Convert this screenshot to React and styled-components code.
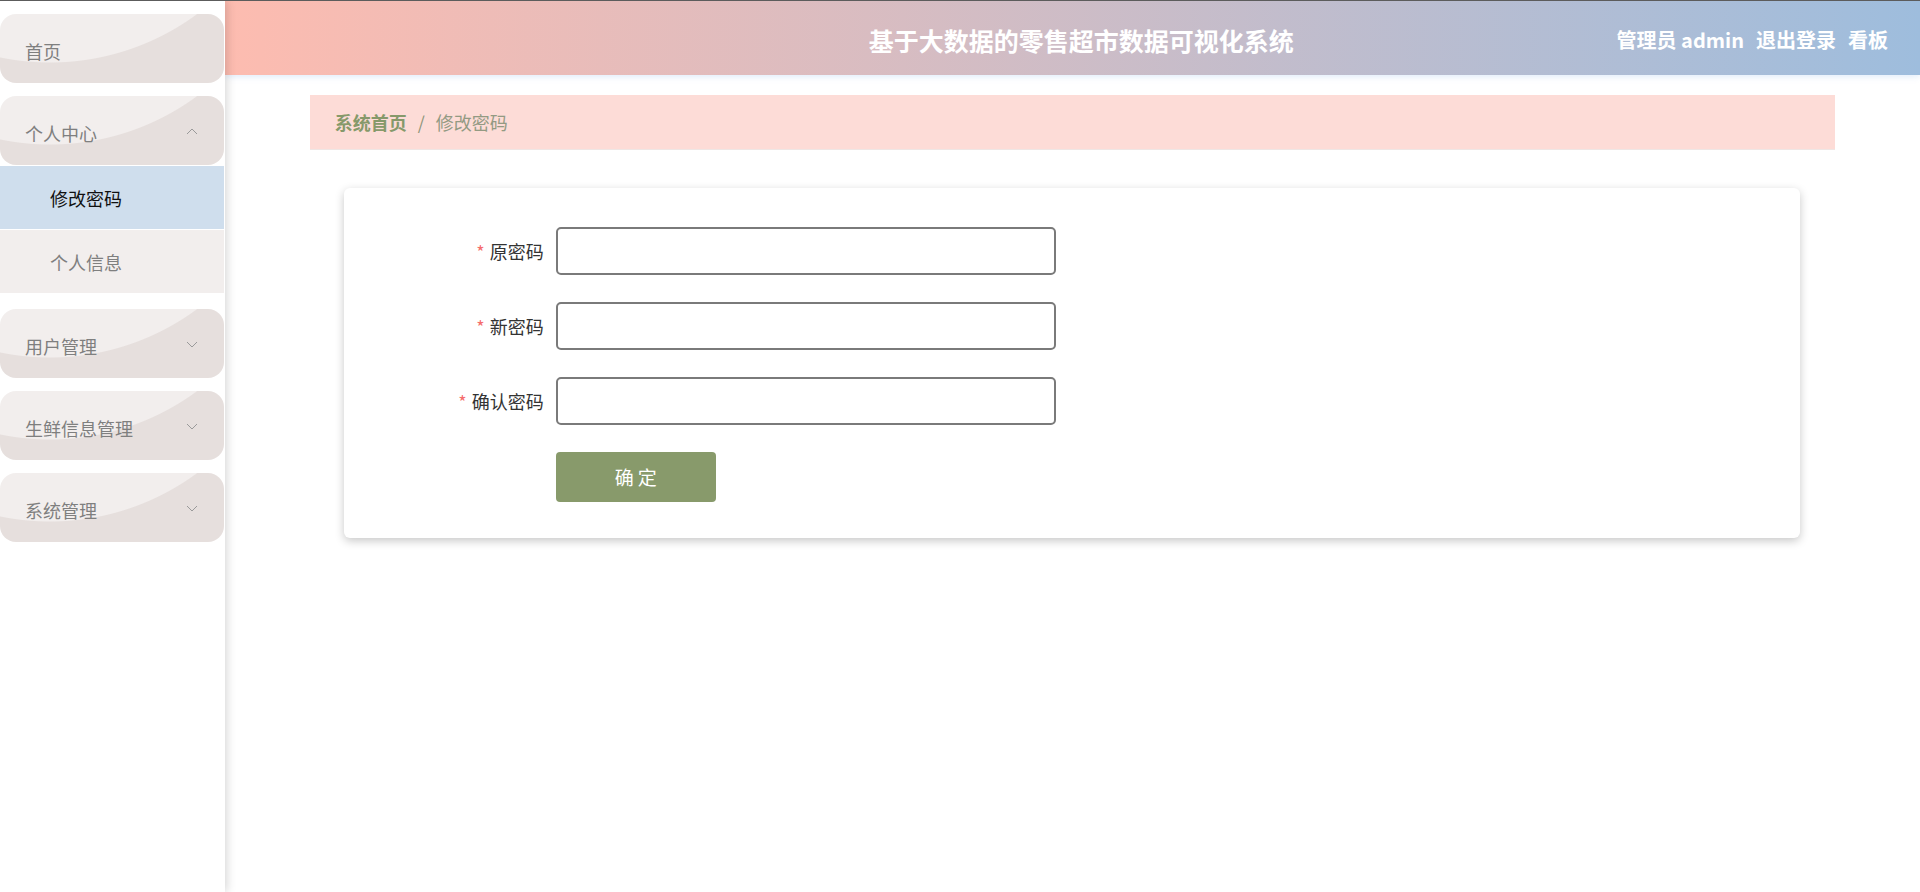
import React from 'react'
import styled, { createGlobalStyle } from 'styled-components'

const GlobalStyle = createGlobalStyle`
  html, body {
    margin: 0;
    padding: 0;
    background: #fff;
  }
  body {
    border-top: 1px solid #5c5c5c;
    font-family: "Noto Sans CJK SC", "Noto Sans", sans-serif;
  }
  * {
    box-sizing: border-box;
  }
`

const Layout = styled.div`
  display: flex;
  min-height: 891px;
`

const Sidebar = styled.aside`
  position: relative;
  z-index: 2;
  width: 225px;
  flex-shrink: 0;
  background: #fff;
  box-shadow: 2px 0 9px rgba(0, 0, 0, 0.16);
`

const MenuItem = styled.div`
  display: flex;
  align-items: center;
  justify-content: space-between;
  height: 69px;
  margin-top: 13px;
  margin-right: 1px;
  padding: 5px 26px 0 25px;
  border-radius: 16px;
  font-size: 18px;
  color: #7f7f7f;
  background: radial-gradient(circle 248px at 50px -199px, #f2eeed 247px, #e6dfdd 248px);
  cursor: pointer;
`

const SubMenu = styled.div`
  padding-bottom: 3px;
`

const SubItem = styled.div`
  display: flex;
  align-items: center;
  height: 63px;
  margin-top: 1px;
  margin-right: 1px;
  padding: 1px 0 0 50px;
  font-size: 18px;
  color: ${({ active }) => (active ? '#111' : '#7f7f7f')};
  background: ${({ active }) => (active ? '#cfdeed' : '#f2eeed')};
  cursor: pointer;
`

const Chevron = ({ up }) => (
  <svg width='12' height='7' viewBox='0 0 12 7' style={{ marginTop: -4 }}>
    <polyline
      points={up ? '1,6 6,1 11,6' : '1,1 6,6 11,1'}
      fill='none'
      stroke='#9a9a9a'
      strokeWidth='1'
    />
  </svg>
)

const Main = styled.main`
  flex: 1;
  min-width: 0;
`

const Header = styled.header`
  display: flex;
  align-items: center;
  height: 74px;
  padding-right: 32px;
  background: linear-gradient(90deg, #fdbcb0, #9ebddd);
  box-shadow: 0 2px 6px rgba(190, 215, 245, 0.45);
  color: #fff;
  font-weight: bold;
`

const Title = styled.h1`
  flex: 1;
  margin: 0;
  padding: 3px 0 0 321px;
  text-align: center;
  font-size: 25px;
  font-weight: bold;
`

const UserBar = styled.div`
  display: flex;
  gap: 12px;
  padding-top: 3px;
  font-size: 20px;

  span {
    cursor: pointer;
  }
`

const Content = styled.div`
  width: 90%;
  margin: 20px auto 0;
`

const Breadcrumb = styled.div`
  display: flex;
  align-items: center;
  height: 55px;
  padding-left: 25px;
  background: #fddcd7;
  border-bottom: 1px solid #efe6e4;
  font-size: 18px;

  b {
    color: #86996a;
  }

  i {
    font-style: normal;
    margin: 0 11px;
    color: #8e957a;
  }

  span {
    color: #939a83;
  }
`

const Card = styled.div`
  margin: 38px 35px 0 34px;
  padding: 39px 0 36px;
  background: #fff;
  border-radius: 6px;
  box-shadow: 0 3px 10px rgba(0, 0, 0, 0.22);
`

const Row = styled.div`
  display: flex;
  align-items: center;
  margin-bottom: ${({ last }) => (last ? '26px' : '27px')};
`

const Label = styled.label`
  width: 212px;
  padding-right: 12px;
  text-align: right;
  font-size: 18px;
  color: #333;

  em {
    font-style: normal;
    color: #f56c6c;
    margin-right: 5px;
  }
`

const Input = styled.input`
  width: 500px;
  height: 48px;
  padding: 0 14px;
  border: 2px solid #7a7a7a;
  border-radius: 5px;
  font-size: 16px;
  outline: none;
`

const Submit = styled.button`
  margin-left: 212px;
  width: 160px;
  height: 50px;
  padding-bottom: 3px;
  border: none;
  border-radius: 4px;
  background: #889a6b;
  color: #fff;
  font-family: inherit;
  font-size: 19px;
  letter-spacing: 4px;
  text-indent: 4px;
  cursor: pointer;
`

const fields = ['原密码', '新密码', '确认密码']

export default function App () {
  return (
    <>
      <GlobalStyle />
      <Layout>
        <Sidebar>
          <MenuItem>首页</MenuItem>
          <MenuItem>个人中心<Chevron up /></MenuItem>
          <SubMenu>
            <SubItem active>修改密码</SubItem>
            <SubItem>个人信息</SubItem>
          </SubMenu>
          <MenuItem>用户管理<Chevron /></MenuItem>
          <MenuItem>生鲜信息管理<Chevron /></MenuItem>
          <MenuItem>系统管理<Chevron /></MenuItem>
        </Sidebar>
        <Main>
          <Header>
            <Title>基于大数据的零售超市数据可视化系统</Title>
            <UserBar>
              <span>管理员 admin</span>
              <span>退出登录</span>
              <span>看板</span>
            </UserBar>
          </Header>
          <Content>
            <Breadcrumb>
              <b>系统首页</b>
              <i>/</i>
              <span>修改密码</span>
            </Breadcrumb>
            <Card>
              {fields.map((f) => (
                <Row key={f}>
                  <Label><em>*</em>{f}</Label>
                  <Input type='password' />
                </Row>
              ))}
              <Submit>确定</Submit>
            </Card>
          </Content>
        </Main>
      </Layout>
    </>
  )
}
